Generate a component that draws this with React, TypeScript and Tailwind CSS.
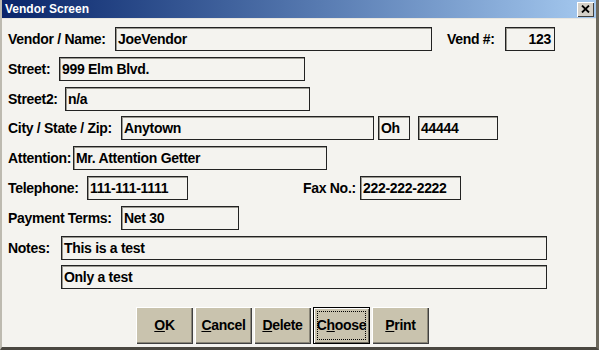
import type { ReactNode } from 'react';

const font = { fontFamily: '"Liberation Sans", Arial, sans-serif' };

function Field({ width, value, right = false }: { width: string; value: string; right?: boolean }) {
  return (
    <div
      className={`${width} h-[24px] shrink-0 border border-[#222] bg-[#f4f3ef] shadow-[inset_1px_1px_0_#9a9890] flex items-center ${
        right ? 'justify-end pr-[3px]' : 'pl-[2px]'
      } text-black`}
    >
      {value}
    </div>
  );
}

function Label({ width, children }: { width: string; children: ReactNode }) {
  return <div className={`${width} shrink-0 text-black`}>{children}</div>;
}

function Btn({ children, focused = false }: { children: ReactNode; focused?: boolean }) {
  return (
    <div
      className={`w-[57px] h-[37px] bg-[#c9c3ae] flex items-center justify-center ${
        focused
          ? 'border border-black shadow-[inset_1px_1px_0_#fff,inset_-1px_-1px_0_#6e6a5e]'
          : 'shadow-[inset_1px_1px_0_#fff,inset_-1px_-1px_0_#404040,inset_-2px_-2px_0_#8a8678]'
      }`}
    >
      {focused ? (
        <div className="w-[49px] h-[29px] border border-dotted border-black flex items-center justify-center">
          {children}
        </div>
      ) : (
        children
      )}
    </div>
  );
}

export default function App() {
  return (
    <div
      className="w-[599px] h-[350px] bg-[#f4f3ef] flex flex-col text-[14px] tracking-[-0.3px] font-bold border-l-2 border-l-[#bdbab0] border-r-[3px] border-r-[#6b675c] border-b-[3px] border-b-[#4a4740] overflow-hidden"
      style={font}
    >
      {/* title bar */}
      <div className="h-[19px] shrink-0 flex items-center justify-between pl-[3px] pr-[2px] bg-gradient-to-r from-[#0a246a] to-[#a6caf0] border-b border-b-[#e8e6e0]">
        <span className="text-white text-[12px] tracking-normal font-bold">Vendor Screen</span>
        <div className="w-[17px] h-[15px] bg-[#d4d0c8] shadow-[inset_1px_1px_0_#fff,inset_-1px_-1px_0_#404040] flex items-center justify-center">
          <svg width="9" height="8" viewBox="0 0 9 8">
            <path d="M1 0.5 L8 7.5 M8 0.5 L1 7.5" stroke="#000" strokeWidth="1.8" />
          </svg>
        </div>
      </div>

      <div className="flex flex-col pl-[6px]">
        <div className="flex items-center mt-[8px]">
          <Label width="w-[107px]">Vendor / Name:</Label>
          <Field width="w-[317px]" value="JoeVendor" />
          <Label width="w-[58px] ml-[15px]">Vend #:</Label>
          <Field width="w-[50px]" value="123" right />
        </div>

        <div className="flex items-center mt-[6px]">
          <Label width="w-[51px]">Street:</Label>
          <Field width="w-[246px]" value="999 Elm Blvd." />
        </div>

        <div className="flex items-center mt-[6px]">
          <Label width="w-[57px]">Street2:</Label>
          <Field width="w-[245px]" value="n/a" />
        </div>

        <div className="flex items-center mt-[5px]">
          <Label width="w-[113px]">City / State / Zip:</Label>
          <Field width="w-[253px]" value="Anytown" />
          <div className="w-[4px]" />
          <Field width="w-[32px]" value="Oh" />
          <div className="w-[8px]" />
          <Field width="w-[80px]" value="44444" />
        </div>

        <div className="flex items-center mt-[6px]">
          <Label width="w-[65px]">Attention:</Label>
          <Field width="w-[254px]" value="Mr. Attention Getter" />
        </div>

        <div className="flex items-center mt-[6px]">
          <Label width="w-[79px]">Telephone:</Label>
          <Field width="w-[101px]" value="111-111-1111" />
          <Label width="w-[57px] ml-[115px]">Fax No.:</Label>
          <Field width="w-[101px]" value="222-222-2222" />
        </div>

        <div className="flex items-center mt-[6px]">
          <Label width="w-[113px]">Payment Terms:</Label>
          <Field width="w-[118px]" value="Net 30" />
        </div>

        <div className="flex items-center mt-[6px]">
          <Label width="w-[53px]">Notes:</Label>
          <Field width="w-[486px]" value="This is a test" />
        </div>

        <div className="flex items-center mt-[5px]">
          <div className="w-[53px] shrink-0" />
          <Field width="w-[486px]" value="Only a test" />
        </div>
      </div>

      <div className="flex gap-[2px] mt-[18px] ml-[134px] text-black">
        <Btn>
          <span>
            <u>O</u>K
          </span>
        </Btn>
        <Btn>
          <span>
            <u>C</u>ancel
          </span>
        </Btn>
        <Btn>
          <span>
            <u>D</u>elete
          </span>
        </Btn>
        <Btn focused>
          <span>
            C<u>h</u>oose
          </span>
        </Btn>
        <Btn>
          <span>
            <u>P</u>rint
          </span>
        </Btn>
      </div>
    </div>
  );
}
